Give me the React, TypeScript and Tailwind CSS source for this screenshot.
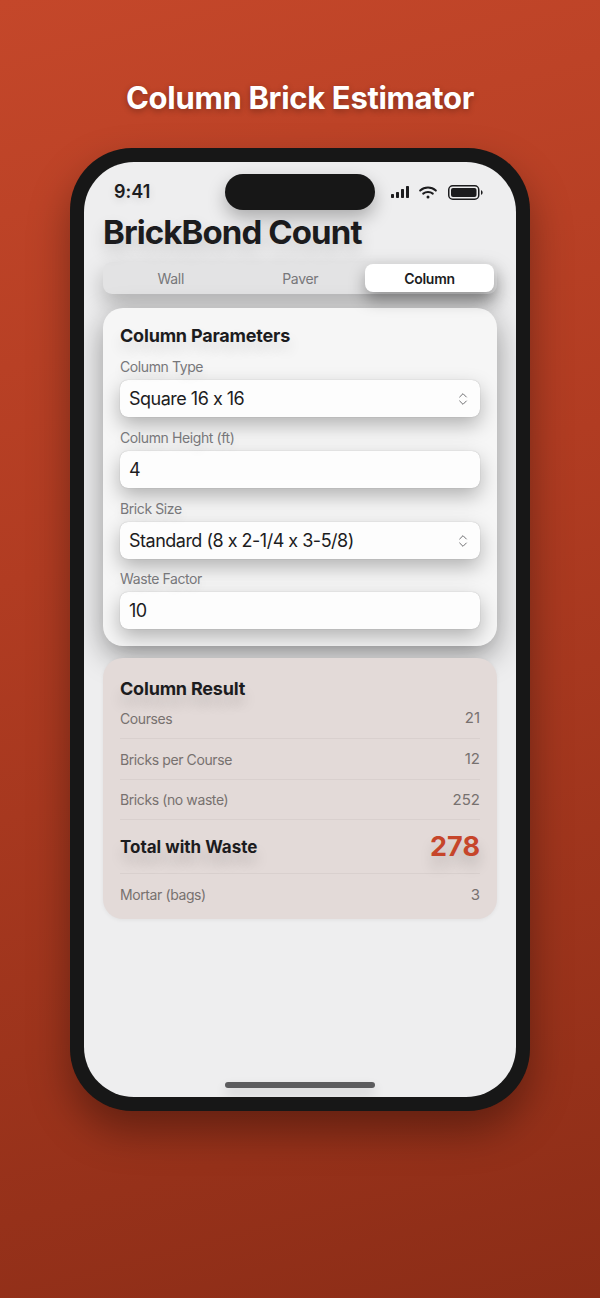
import { ChevronsUpDown } from 'lucide-react';

const fieldShadow = 'shadow-[0_8px_20px_rgba(0,0,0,0.28),0_0_1px_rgba(0,0,0,0.3)]';

function Label({ children }: { children: string }) {
  return <div className="h-[20px] text-[14px] leading-[20px] tracking-[-0.4px] text-[#77777a] [text-shadow:0_5px_10px_rgba(0,0,0,0.1)]">{children}</div>;
}

function Field({ value, select }: { value: string; select?: boolean }) {
  return (
    <div className={`mt-[3px] flex h-[37px] items-center justify-between rounded-[8px] bg-[#fdfdfd] px-[9px] text-[18px] tracking-[-0.5px] text-[#1c1c1e] ${fieldShadow}`}>
      <span>{value}</span>
      {select && <ChevronsUpDown className="h-[16px] w-[16px] text-[#6f6f72]" strokeWidth={1.5} />}
    </div>
  );
}

function Row({ label, value, height }: { label: string; value: string; height: string }) {
  return (
    <div className={`flex items-center justify-between border-b border-[#d9d0ce] text-[14px] text-[#77716f] ${height}`}>
      <span className="tracking-[-0.4px]">{label}</span>
      <span className="text-[15px] leading-[20px]">{value}</span>
    </div>
  );
}

function StatusIcons() {
  return (
    <div className="flex items-center gap-[10px]">
      <svg width="18" height="12" viewBox="0 0 18 12" fill="#1c1c1e">
        <rect x="0" y="8" width="3" height="4" rx="0.8" />
        <rect x="5" y="6" width="3" height="6" rx="0.8" />
        <rect x="10" y="3" width="3" height="9" rx="0.8" />
        <rect x="15" y="0" width="3" height="12" rx="0.8" />
      </svg>
      <svg width="18" height="13" viewBox="0 0 18 13" fill="none" stroke="#1c1c1e" strokeWidth="2" strokeLinecap="round">
        <path d="M1.2 4.6C5.6 0.6 12.4 0.6 16.8 4.6" />
        <path d="M4.2 7.6C6.9 5.4 11.1 5.4 13.8 7.6" />
        <circle cx="9" cy="11" r="1.5" fill="#1c1c1e" stroke="none" />
      </svg>
      <svg className="ml-[1px]" width="35" height="15" viewBox="0 0 35 15" fill="none">
        <rect x="0.75" y="0.75" width="30" height="13.5" rx="4" stroke="#1c1c1e" strokeWidth="1.5" />
        <rect x="3" y="3" width="25.5" height="9" rx="2" fill="#1c1c1e" />
        <path d="M33 5.2C34.2 5.6 34.6 6.4 34.6 7.5C34.6 8.6 34.2 9.4 33 9.8Z" fill="#1c1c1e" />
      </svg>
    </div>
  );
}

export default function App() {
  return (
    <div className="flex h-[1298px] w-[600px] flex-col items-center overflow-hidden bg-[linear-gradient(165deg,#c4472a_0%,#b13c22_40%,#8c2d17_100%)] font-['Inter',sans-serif] [font-feature-settings:'calt'_0]">
      <h1 className="mt-[79px] h-[38px] text-[31px] font-bold leading-[38px] tracking-[-0.31px] text-white [text-shadow:0_2px_6px_rgba(0,0,0,0.3)]">
        Column Brick Estimator
      </h1>

      {/* Phone */}
      <div className="mt-[31px] h-[963px] w-[460px] rounded-[62px] bg-[#171717] p-[14px] shadow-[0_20px_40px_rgba(0,0,0,0.35)]">
        <div className="h-[935px] w-[432px] overflow-hidden rounded-[50px] bg-[#eeeeef]">
          {/* Status bar */}
          <div className="flex h-[48px] items-center justify-between pl-[30px] pr-[33px] pt-[12px]">
            <span className="text-[18px] font-semibold leading-[22px] text-[#1c1c1e] [text-shadow:0_3px_8px_rgba(0,0,0,0.12)]">9:41</span>
            <StatusIcons />
          </div>

          <div className="relative">
            <div className="absolute left-[141px] top-[-36px] h-[36px] w-[150px] rounded-[18px] bg-[#171717] shadow-[0_8px_18px_rgba(0,0,0,0.28)]" />
          </div>

          <div className="px-[19px]">
            <h2 className="mt-[2px] h-[40px] text-[33px] font-bold leading-[40px] tracking-[-0.9px] text-[#1c1c1e] [text-shadow:0_8px_16px_rgba(0,0,0,0.16)]">
              BrickBond Count
            </h2>

            {/* Segmented control */}
            <div className="mt-[10px] flex h-[32px] items-center rounded-[9px] bg-[#e3e3e4] p-[2px_3px] text-[14px] tracking-[-0.3px] shadow-[0_10px_22px_rgba(0,0,0,0.26)]">
              <div className="flex-1 text-center text-[#77777a]">Wall</div>
              <div className="flex-1 text-center text-[#77777a]">Paver</div>
              <div className="flex h-[28px] w-[129px] flex-none items-center justify-center rounded-[8px] bg-white font-semibold text-[#1c1c1e] shadow-[0_8px_16px_rgba(0,0,0,0.34)]">
                Column
              </div>
            </div>

            {/* Parameters */}
            <div className="mt-[14px] h-[338px] rounded-[20px] bg-[#f6f6f6] px-[17px] pt-[16px] shadow-[0_10px_30px_rgba(0,0,0,0.38)]">
              <h3 className="h-[24px] text-[18px] font-bold leading-[24px] tracking-[-0.2px] text-[#1c1c1e] [text-shadow:0_8px_14px_rgba(0,0,0,0.14)]">Column Parameters</h3>
              <div className="mt-[9px]">
                <Label>Column Type</Label>
                <Field value="Square 16 x 16" select />
              </div>
              <div className="mt-[11px]">
                <Label>Column Height (ft)</Label>
                <Field value="4" />
              </div>
              <div className="mt-[11px]">
                <Label>Brick Size</Label>
                <Field value="Standard (8 x 2-1/4 x 3-5/8)" select />
              </div>
              <div className="mt-[10px]">
                <Label>Waste Factor</Label>
                <Field value="10" />
              </div>
            </div>

            {/* Result */}
            <div className="mt-[12px] h-[261px] rounded-[20px] bg-[#e3dad8] px-[17px] pt-[19px] shadow-[0_1px_4px_rgba(0,0,0,0.06)]">
              <h3 className="h-[24px] text-[18px] font-bold leading-[24px] tracking-[-0.2px] text-[#1c1c1e] [text-shadow:0_10px_14px_rgba(0,0,0,0.16)]">Column Result</h3>
              <Row label="Courses" value="21" height="h-[38px] pb-[3px]" />
              <Row label="Bricks per Course" value="12" height="h-[41px]" />
              <Row label="Bricks (no waste)" value="252" height="h-[40px]" />
              <div className="flex h-[54px] items-center justify-between border-b border-[#d9d0ce] pt-[2px]">
                <span className="text-[17px] font-bold text-[#1c1c1e] [text-shadow:0_10px_14px_rgba(0,0,0,0.18)]">Total with Waste</span>
                <span className="text-[27px] font-bold text-[#c6452a] [text-shadow:0_10px_14px_rgba(0,0,0,0.18)]">278</span>
              </div>
              <div className="flex h-[41px] items-center justify-between text-[14px] text-[#77716f]">
                <span className="tracking-[-0.4px]">Mortar (bags)</span>
                <span className="text-[15px] leading-[20px]">3</span>
              </div>
            </div>
          </div>

          {/* Home indicator */}
          <div className="mx-auto mt-[163px] h-[6px] w-[150px] rounded-full bg-[#5c5c5e] shadow-[0_6px_12px_rgba(0,0,0,0.15)]" />
        </div>
      </div>
    </div>
  );
}
